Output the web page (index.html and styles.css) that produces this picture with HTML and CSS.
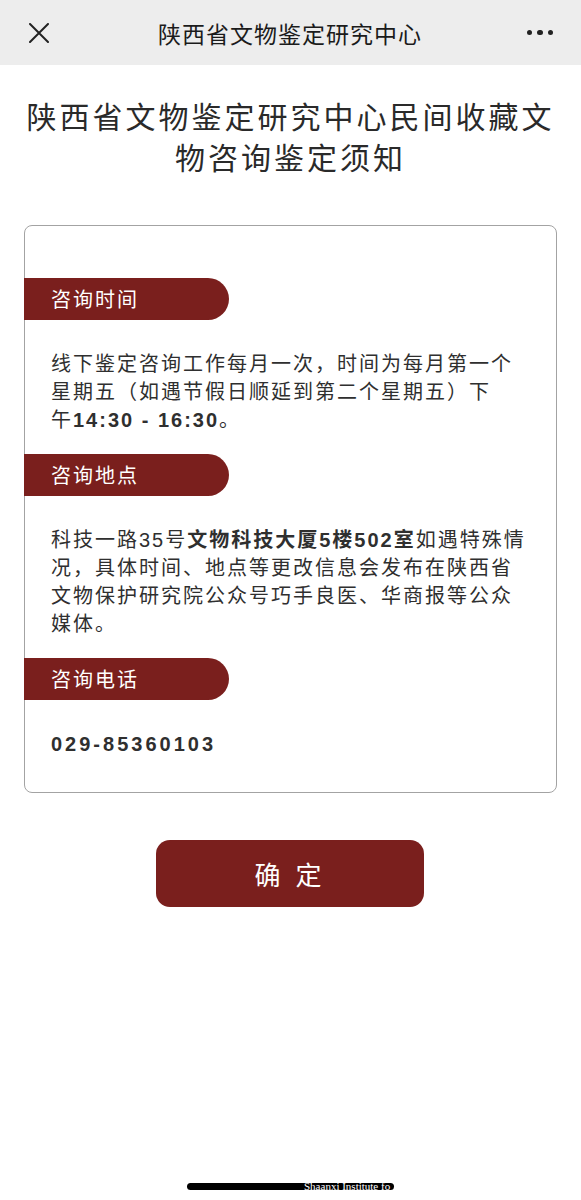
FILE: index.html
```html
<!DOCTYPE html>
<html lang="zh-CN">
<head>
<meta charset="utf-8">
<title>陕西省文物鉴定研究中心</title>
<link rel="stylesheet" href="styles.css">
</head>
<body>
<header class="navbar">
  <div class="nav-left">
    <svg class="icon-close" width="20" height="20" viewBox="0 0 20 20"><path d="M1 1 L19 19 M19 1 L1 19" stroke="#222" stroke-width="2" fill="none" stroke-linecap="round"/></svg>
  </div>
  <div class="nav-title">陕西省文物鉴定研究中心</div>
  <div class="nav-right">
    <span class="dot"></span><span class="dot"></span><span class="dot"></span>
  </div>
</header>

<main class="page">
  <h1 class="page-title">陕西省文物鉴定研究中心民间收藏文物咨询鉴定须知</h1>

  <section class="card">
    <div class="tab">咨询时间</div>
    <p class="para">线下鉴定咨询工作每月一次，时间为每月第一个星期五（如遇节假日顺延到第二个星期五）下<span class="keep">午<b>14:30 - 16:30</b></span>。</p>

    <div class="tab">咨询地点</div>
    <p class="para">科技一路35号<b>文物科技大厦5楼502室</b>如遇特殊情况，具体时间、地点等更改信息会发布在陕西省文物保护研究院公众号巧手良医、华商报等公众媒体。</p>

    <div class="tab">咨询电话</div>
    <p class="para phone"><b>029-85360103</b></p>
  </section>

  <div class="actions">
    <button class="btn-ok" type="button">确 定</button>
  </div>

  <div class="home-bar"><span class="home-text">Shaanxi Institute fo</span></div>
</main>
</body>
</html>
```

FILE: styles.css
```css
* { box-sizing: border-box; }

html, body {
  margin: 0;
  padding: 0;
  background: #ffffff;
}

body {
  font-family: "Liberation Sans", "Noto Sans CJK SC", sans-serif;
  color: #333333;
  width: 581px;
  height: 1200px;
  overflow: hidden;
}

.navbar {
  height: 65px;
  background: #ededed;
  display: grid;
  grid-template-columns: 1fr auto 1fr;
  align-items: center;
  padding: 0 28px 0 29px;
}

.nav-left {
  display: flex;
  align-items: center;
}

.icon-close {
  display: block;
  margin-top: 1px;
}

.nav-title {
  font-family: "Noto Sans CJK SC", sans-serif;
  font-size: 23px;
  letter-spacing: 1px;
  color: #1b1b1b;
  line-height: 30px;
  padding-right: 2px;
}

.nav-right {
  display: flex;
  justify-content: flex-end;
  gap: 5px;
  align-items: center;
}

.dot {
  width: 5.5px;
  height: 5.5px;
  border-radius: 50%;
  background: #222;
}

.page {
  display: flex;
  flex-direction: column;
}

.page-title {
  margin: 0;
  padding: 30px 20px 0;
  font-family: "Noto Sans CJK SC", sans-serif;
  font-weight: 400;
  font-size: 30px;
  letter-spacing: 3px;
  line-height: 41px;
  text-align: center;
  color: #2a2a2a;
}

.card {
  margin: 48px 24px 0;
  border: 1px solid #a3a3a3;
  border-radius: 8px;
  padding: 52px 0 34px;
}

.tab {
  margin-left: -1px;
  width: 205px;
  height: 42px;
  line-height: 42px;
  padding-left: 27px;
  background: #7a1f1d;
  color: #ffffff;
  font-family: "Noto Sans CJK SC", sans-serif;
  font-size: 20px;
  letter-spacing: 2px;
  border-radius: 0 21px 21px 0;
}

.para {
  margin: 30px 26px 20px;
  font-size: 20px;
  letter-spacing: 2px;
  line-height: 28px;
  color: #2f2f2f;
}

.para b {
  font-weight: 700;
}

.para.phone {
  margin-bottom: 0;
  letter-spacing: 3px;
}

.keep {
  white-space: nowrap;
}

.actions {
  display: flex;
  justify-content: center;
  margin-top: 47px;
}

.btn-ok {
  width: 268px;
  height: 67px;
  border: none;
  border-radius: 14px;
  background: #7a1f1d;
  color: #ffffff;
  font-family: "Liberation Sans", "Noto Sans CJK SC", sans-serif;
  font-size: 26px;
  letter-spacing: 4px;
  padding: 0;
  margin-right: 1px;
}

.home-bar {
  align-self: center;
  margin-top: 276px;
  width: 207px;
  height: 7px;
  border-radius: 4px;
  background: #000;
  display: flex;
  align-items: center;
  padding-left: 117px;
}

.home-text {
  font-family: "Liberation Serif", serif;
  font-size: 11px;
  line-height: 7px;
  color: #ffffff;
  white-space: nowrap;
}
```
